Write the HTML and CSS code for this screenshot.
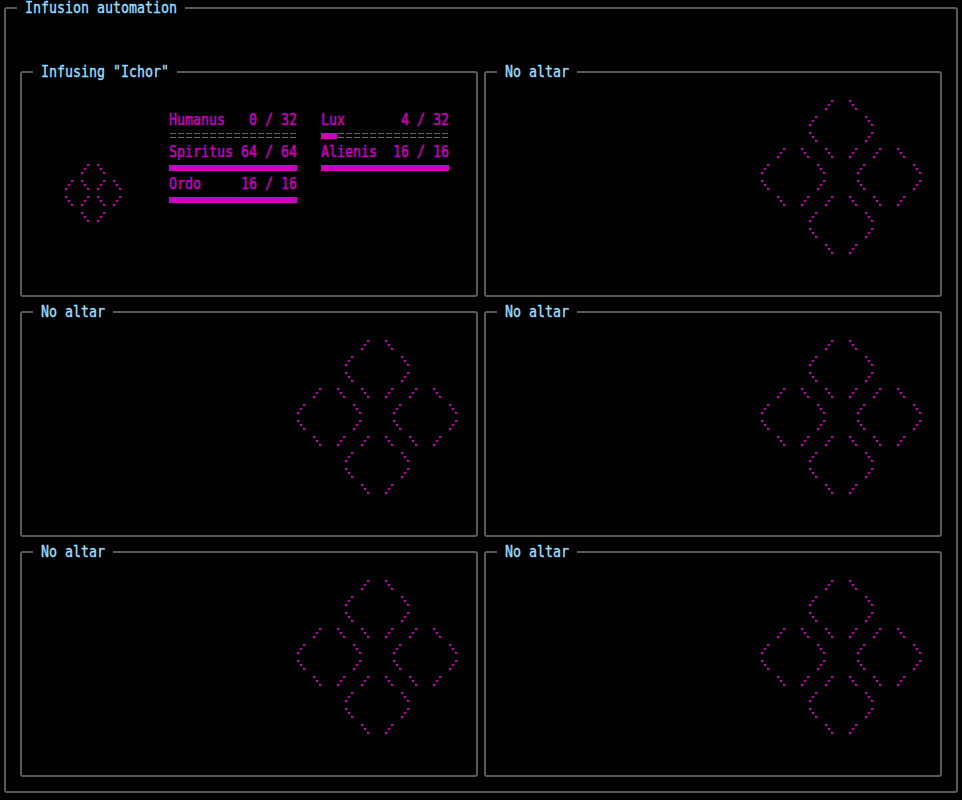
FILE: index.html
```
<!DOCTYPE html>
<html lang="en">
<head>
<meta charset="utf-8">
<title>Infusion automation</title>
<link rel="stylesheet" href="styles.css">
</head>
<body>
<svg class="defs" aria-hidden="true">
  <defs>
    <path id="f" d="M6 4h2v2h-2zM3 8h2v2h-2zM0 12h2v2h-2z"/>
    <path id="b" d="M0 4h2v2h-2zM3 8h2v2h-2zM6 12h2v2h-2z"/>
    <g id="small-altar">
      <use href="#f" x="16"/><use href="#b" x="32"/>
      <use href="#f" y="16"/><use href="#b" x="16" y="16"/><use href="#f" x="32" y="16"/><use href="#b" x="48" y="16"/>
      <use href="#b" y="32"/><use href="#f" x="16" y="32"/><use href="#b" x="32" y="32"/><use href="#f" x="48" y="32"/>
      <use href="#b" x="16" y="48"/><use href="#f" x="32" y="48"/>
    </g>
    <g id="altar">
      <use href="#f" x="64"/><use href="#b" x="88"/>
      <use href="#f" x="48" y="16"/><use href="#b" x="104" y="16"/>
      <use href="#b" x="48" y="32"/><use href="#f" x="104" y="32"/>
      <use href="#f" x="16" y="48"/><use href="#b" x="40" y="48"/><use href="#b" x="64" y="48"/><use href="#f" x="88" y="48"/><use href="#f" x="112" y="48"/><use href="#b" x="136" y="48"/>
      <use href="#f" y="64"/><use href="#b" x="56" y="64"/><use href="#f" x="96" y="64"/><use href="#b" x="152" y="64"/>
      <use href="#b" y="80"/><use href="#f" x="56" y="80"/><use href="#b" x="96" y="80"/><use href="#f" x="152" y="80"/>
      <use href="#b" x="16" y="96"/><use href="#f" x="40" y="96"/><use href="#f" x="64" y="96"/><use href="#b" x="88" y="96"/><use href="#b" x="112" y="96"/><use href="#f" x="136" y="96"/>
      <use href="#f" x="48" y="112"/><use href="#b" x="104" y="112"/>
      <use href="#b" x="48" y="128"/><use href="#f" x="104" y="128"/>
      <use href="#b" x="64" y="144"/><use href="#f" x="88" y="144"/>
    </g>
  </defs>
</svg>
<main class="frame screen">
  <h1 class="title"><span>Infusion automation</span></h1>
  <div class="panels">
    <section class="frame panel active">
      <h2 class="title"><span>Infusing "Ichor"</span></h2>
      <svg class="small-altar" width="56" height="64"><use href="#small-altar"/></svg>
      <div class="aspects">
        <div class="aspect"><p class="label"><span>Humanus   0 / 32</span></p><div class="bar"></div></div>
        <div class="aspect"><p class="label"><span>Lux       4 / 32</span></p><div class="bar"><div class="fill" style="width:12.5%"></div></div></div>
        <div class="aspect"><p class="label"><span>Spiritus 64 / 64</span></p><div class="bar"><div class="fill" style="width:100%"></div></div></div>
        <div class="aspect"><p class="label"><span>Alienis  16 / 16</span></p><div class="bar"><div class="fill" style="width:100%"></div></div></div>
        <div class="aspect"><p class="label"><span>Ordo     16 / 16</span></p><div class="bar"><div class="fill" style="width:100%"></div></div></div>
      </div>
    </section>
    <section class="frame panel idle"><h2 class="title"><span>No altar</span></h2><svg class="altar" width="162" height="160"><use href="#altar"/></svg></section>
    <section class="frame panel idle"><h2 class="title"><span>No altar</span></h2><svg class="altar" width="162" height="160"><use href="#altar"/></svg></section>
    <section class="frame panel idle"><h2 class="title"><span>No altar</span></h2><svg class="altar" width="162" height="160"><use href="#altar"/></svg></section>
    <section class="frame panel idle"><h2 class="title"><span>No altar</span></h2><svg class="altar" width="162" height="160"><use href="#altar"/></svg></section>
    <section class="frame panel idle"><h2 class="title"><span>No altar</span></h2><svg class="altar" width="162" height="160"><use href="#altar"/></svg></section>
  </div>
</main>
</body>
</html>
```
FILE: styles.css
```
* { box-sizing: border-box; margin: 0; }

body {
  height: 800px;
  padding: 7px 4px;
  overflow: hidden;
  background: #000;
  color: #cc00c0;
  font: 13.29px/16px "DejaVu Sans Mono", monospace;
}

.defs { position: absolute; width: 0; height: 0; }

.frame {
  position: relative;
  border: 2px solid #5a5a5a;
  border-radius: 3px;
}

.screen { height: 786px; padding: 62px 14px 0; }

/* Titles interrupt the top border of their frame. */
.title {
  position: absolute;
  top: -9px;
  left: 11px;
  height: 16px;
  padding: 0 8px;
  background: #000;
  color: #99dbff;
  font: inherit;
  white-space: pre;
}

.title span, .label span {
  display: block;
  transform: translateY(1px) scaleY(1.14);
  transform-origin: 0 12px;
  -webkit-text-stroke: 0.35px currentColor;
}

.panels {
  display: grid;
  grid-template-columns: 458px 458px;
  grid-auto-rows: 226px;
  gap: 14px 6px;
}

.panel { display: flex; }
.active { padding: 39px 0 0 43px; }
.idle { justify-content: flex-end; padding: 23px 17px 0 0; }

svg { display: block; fill: #cc00c0; shape-rendering: crispEdges; }
.small-altar { margin: 48px 48px 0 0; overflow: visible; }

.aspects {
  display: grid;
  grid-template-columns: 128px 128px;
  grid-auto-rows: 32px;
  column-gap: 24px;
}

.label { height: 16px; white-space: pre; }

.bar {
  height: 6px;
  margin-top: 5px;
  background:
    repeating-linear-gradient(90deg, #000 0 1px, transparent 1px 7px, #000 7px 8px),
    linear-gradient(#696969 0 1px, transparent 1px 4px, #696969 4px 5px, transparent 5px);
}

.fill { height: 6px; background: #cc00c0; }
```
